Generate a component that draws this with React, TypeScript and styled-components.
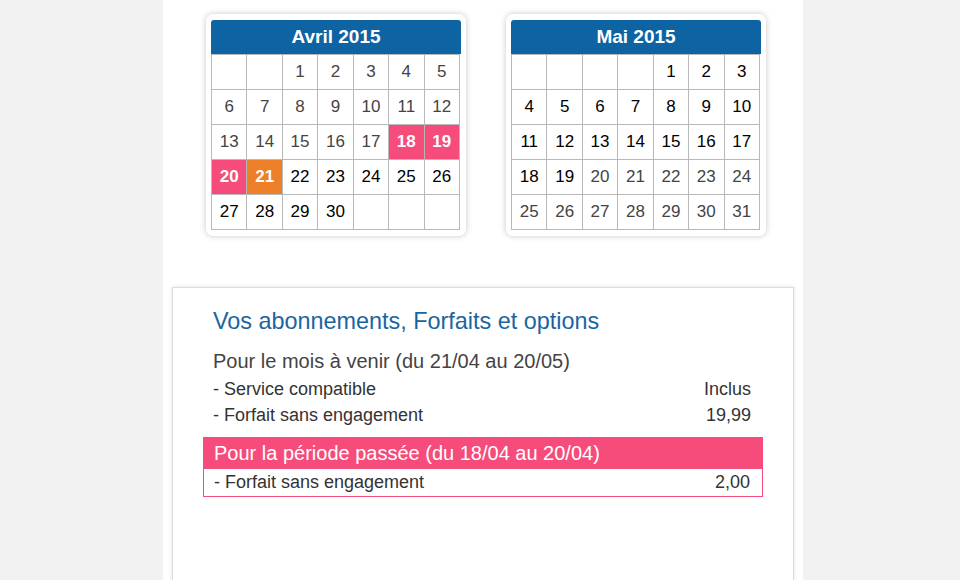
import styled, { createGlobalStyle } from 'styled-components';

const GlobalStyle = createGlobalStyle`
  html, body { margin: 0; padding: 0; background: #f2f2f2; }
  body { font-family: "Liberation Sans", Arial, sans-serif; }
`;

const Column = styled.div`
  width: 640px;
  height: 580px;
  overflow: hidden;
  margin-left: 163px;
  background: #fff;
  padding-top: 14px;
  box-sizing: border-box;
`;

const Calendars = styled.div`
  display: flex;
  gap: 40px;
  padding-left: 43px;
`;

const CalCard = styled.div`
  width: 260px;
  box-sizing: border-box;
  padding: 6px 5px 6px 5px;
  background: #fff;
  border-radius: 7px;
  box-shadow: 0 0 6px rgba(0, 0, 0, 0.22);
`;

const CalHeader = styled.div`
  height: 34px;
  line-height: 34px;
  background: #0e64a2;
  color: #fff;
  font-weight: bold;
  font-size: 19px;
  text-align: center;
  border-radius: 3px 3px 0 0;
`;

const Grid = styled.table`
  border-collapse: collapse;
  width: 249px;
  table-layout: fixed;
`;

const Day = styled.td<{ $tone?: 'past' | 'pink' | 'orange' }>`
  height: 34px;
  padding: 0;
  border: 1px solid #b8b8b8;
  text-align: center;
  font-size: 17px;
  color: ${p => (p.$tone === 'past' ? '#444' : p.$tone ? '#fff' : '#000')};
  font-weight: ${p => (p.$tone === 'pink' || p.$tone === 'orange' ? 'bold' : 'normal')};
  background: ${p =>
    p.$tone === 'pink' ? '#f64c7c' : p.$tone === 'orange' ? '#ec7f27' : '#fff'};
`;

const Panel = styled.div`
  margin: 51px 9px 0 9px;
  height: 400px;
  border: 1px solid #dcdcdc;
  box-shadow: 0 0 4px rgba(0, 0, 0, 0.12);
  padding: 19px 30px 0 30px;
`;

const Title = styled.h2`
  margin: 0;
  padding-left: 10px;
  font-weight: normal;
  font-size: 23.4px;
  color: #1a65a1;
  line-height: 28px;
`;

const SubTitle = styled.div`
  margin-top: 14px;
  padding-left: 10px;
  font-size: 20px;
  color: #444;
  line-height: 24px;
`;

const Line = styled.div<{ $tall?: boolean }>`
  display: flex;
  justify-content: space-between;
  padding: 0 12px 0 10px;
  font-size: 18px;
  color: #333;
  line-height: ${p => (p.$tall ? '27px' : '26px')};
`;

const Lines = styled.div`
  margin-top: 3px;
`;

const PastBlock = styled.div`
  margin-top: 9px;
  border: 1px solid #f64c7c;
`;

const PastHead = styled.div`
  background: #f64c7c;
  color: #fff;
  font-size: 20px;
  line-height: 31px;
  padding-left: 10px;
`;

type Tone = 'past' | 'pink' | 'orange' | undefined;
type Cell = { d?: number; t?: Tone };

const build = (offset: number, days: number, tone: (d: number) => Tone): Cell[][] => {
  const cells: Cell[] = [];
  for (let i = 0; i < offset; i++) cells.push({});
  for (let d = 1; d <= days; d++) cells.push({ d, t: tone(d) });
  while (cells.length < 35) cells.push({});
  const rows: Cell[][] = [];
  for (let r = 0; r < 5; r++) rows.push(cells.slice(r * 7, r * 7 + 7));
  return rows;
};

const april = build(2, 30, d =>
  d === 21 ? 'orange' : d >= 18 && d <= 20 ? 'pink' : d < 18 ? 'past' : undefined
);
const may = build(4, 31, d => (d >= 20 ? 'past' : undefined));

const Calendar = ({ title, rows }: { title: string; rows: Cell[][] }) => (
  <CalCard>
    <CalHeader>{title}</CalHeader>
    <Grid>
      <tbody>
        {rows.map((row, i) => (
          <tr key={i}>
            {row.map((c, j) => (
              <Day key={j} $tone={c.t}>
                {c.d ?? ''}
              </Day>
            ))}
          </tr>
        ))}
      </tbody>
    </Grid>
  </CalCard>
);

export default function App() {
  return (
    <>
      <GlobalStyle />
      <Column>
        <Calendars>
          <Calendar title="Avril 2015" rows={april} />
          <Calendar title="Mai 2015" rows={may} />
        </Calendars>
        <Panel>
          <Title>Vos abonnements, Forfaits et options</Title>
          <SubTitle>Pour le mois à venir (du 21/04 au 20/05)</SubTitle>
          <Lines>
            <Line>
              <span>- Service compatible</span>
              <span>Inclus</span>
            </Line>
            <Line>
              <span>- Forfait sans engagement</span>
              <span>19,99</span>
            </Line>
          </Lines>
          <PastBlock>
            <PastHead>Pour la période passée (du 18/04 au 20/04)</PastHead>
            <Line $tall>
              <span>- Forfait sans engagement</span>
              <span>2,00</span>
            </Line>
          </PastBlock>
        </Panel>
      </Column>
    </>
  );
}
